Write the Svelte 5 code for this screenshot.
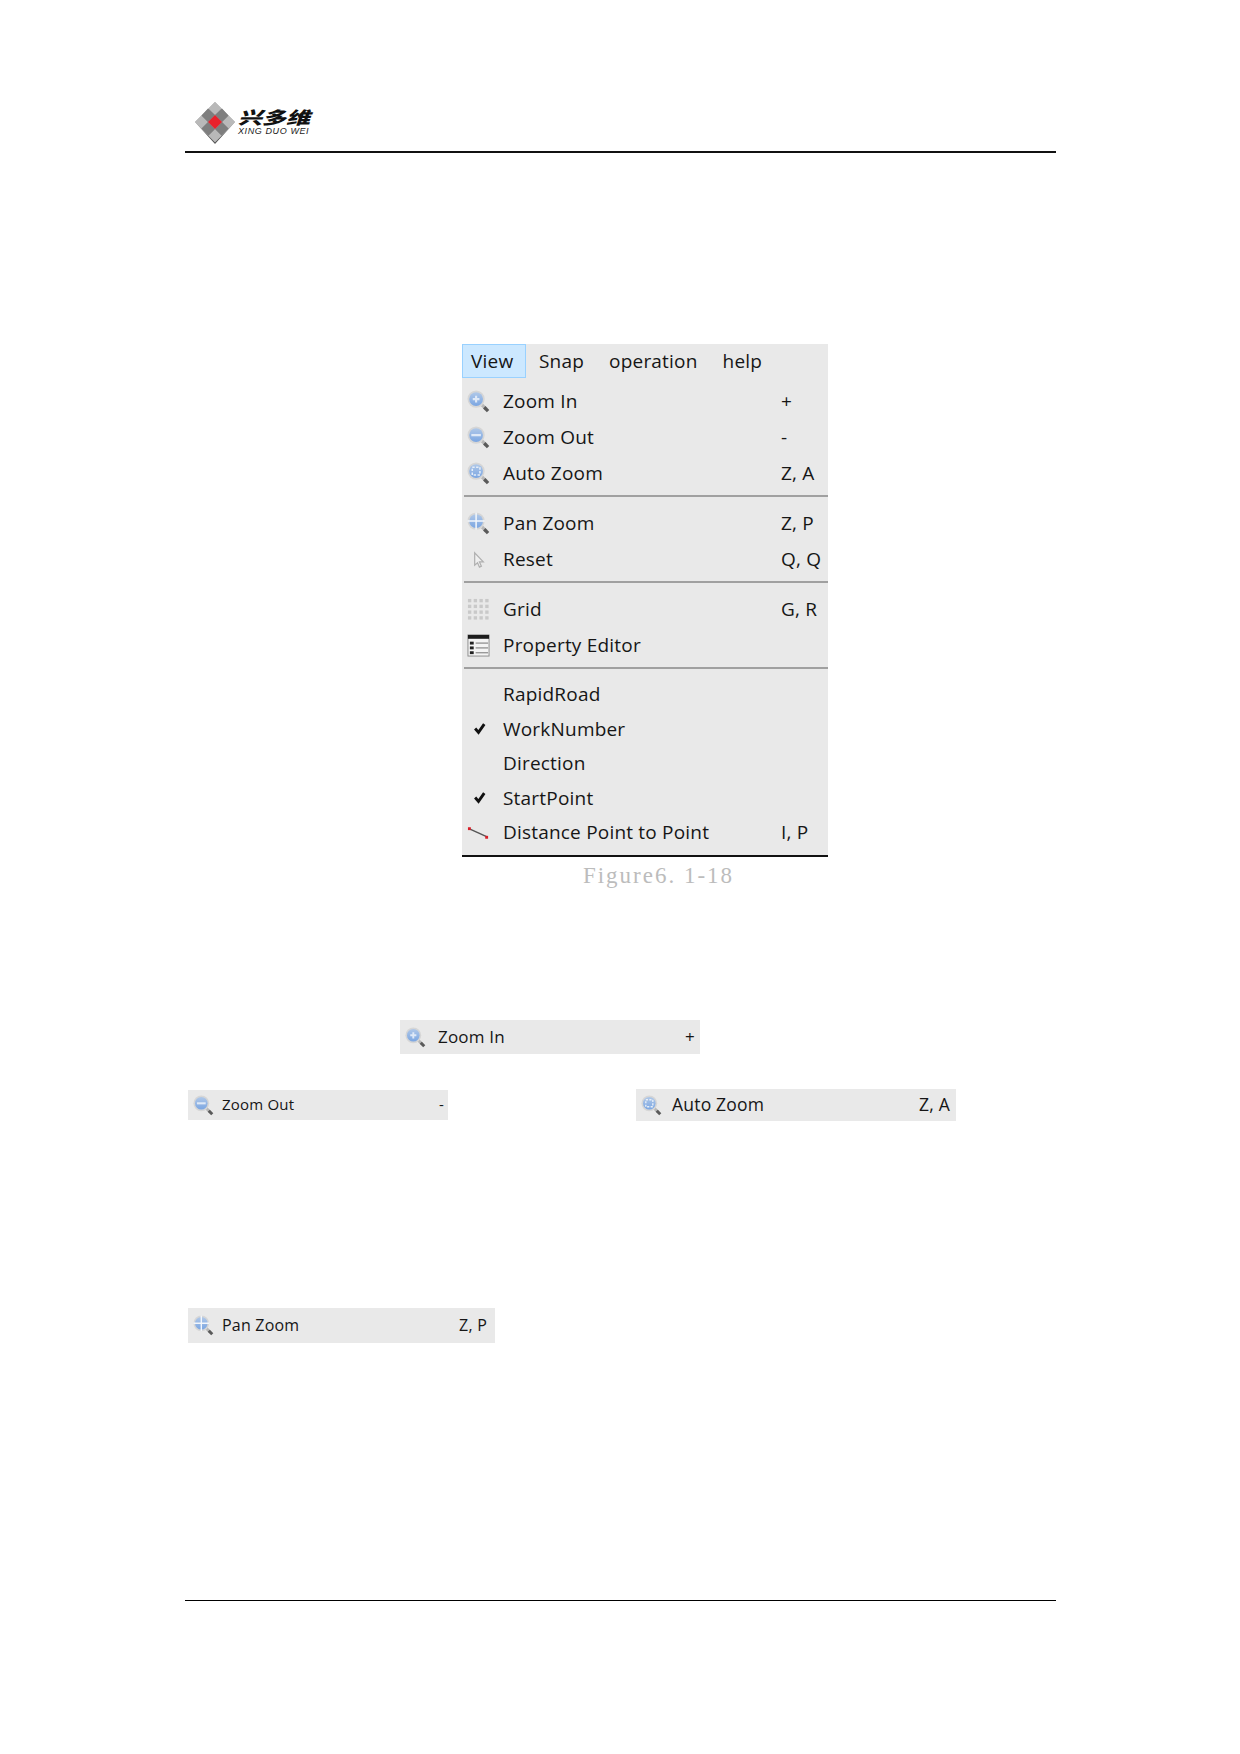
<script lang="ts">
  // Manual page: header logo, one menu screenshot, caption, cropped menu strips.
  const groups = [
    {
      rowClass: "tall",
      items: [
        { icon: "in", label: "Zoom In", key: "+" },
        { icon: "out", label: "Zoom Out", key: "-" },
        { icon: "auto", label: "Auto Zoom", key: "Z, A" },
      ],
    },
    {
      rowClass: "tall",
      items: [
        { icon: "pan", label: "Pan Zoom", key: "Z, P" },
        { icon: "reset", label: "Reset", key: "Q, Q" },
      ],
    },
    {
      rowClass: "tall",
      items: [
        { icon: "grid", label: "Grid", key: "G, R" },
        { icon: "prop", label: "Property Editor", key: "" },
      ],
    },
    {
      rowClass: "short",
      items: [
        { icon: "", label: "RapidRoad", key: "" },
        { icon: "check", label: "WorkNumber", key: "" },
        { icon: "", label: "Direction", key: "" },
        { icon: "check", label: "StartPoint", key: "" },
        { icon: "dist", label: "Distance Point to Point", key: "I, P" },
      ],
    },
  ];
</script>

{#snippet lens(kind: string)}
  <svg class="icon" viewBox="0 0 24 24" aria-hidden="true">
    <defs>
      <linearGradient id="glass-{kind}" x1="0" y1="0" x2="0" y2="1">
        <stop offset="0" stop-color="#b0c8e8" />
        <stop offset="1" stop-color="#7ba6e2" />
      </linearGradient>
    </defs>
    <path d="M14 14l6 6" stroke="#b8b8b8" stroke-width="3.500" />
    <path d="M18 18l4 4" stroke="#5a5a5a" stroke-width="3.500" />
    <circle cx="9.5" cy="9.500" r="9" fill="#d6d6d6" />
    <circle cx="9.5" cy="9.500" r="7.200" fill="url(#glass-{kind})" />
    {#if kind === "in"}
      <path d="M6 9.500h7M9.500 6v7" stroke="#dfe9f7" stroke-width="2.200" />
    {:else if kind === "out"}
      <path d="M4.500 9.500h10" stroke="#dfe9f7" stroke-width="2.400" />
    {:else if kind === "auto"}
      <rect x="5.500" y="5.500" width="8" height="8" fill="none" stroke="#e6eef8" stroke-width="1.600" stroke-dasharray="2.500 1.500" />
    {:else}
      <path d="M0.500 9.500h18M9.500 0.500v18" stroke="#f2f6fb" stroke-width="1.600" />
    {/if}
  </svg>
{/snippet}

{#snippet icon(kind: string)}
  {#if kind === "in" || kind === "out" || kind === "auto" || kind === "pan"}
    {@render lens(kind)}
  {:else if kind === "reset"}
    <svg class="icon" viewBox="0 0 24 24" aria-hidden="true">
      <path d="M8 5v13l3-2.500 2 4.500 2-1-2-4.500h4z" fill="#efefef" stroke="#b0b0b0" stroke-width="1.300" />
    </svg>
  {:else if kind === "grid"}
    <svg class="icon" viewBox="0 0 24 24" aria-hidden="true">
      {#each [1, 7, 13, 19] as y}
        {#each [1, 7, 13, 19] as x}
          <rect {x} {y} width="3.500" height="3.500" fill="#c9c9c9" />
        {/each}
      {/each}
    </svg>
  {:else if kind === "prop"}
    <svg class="icon" viewBox="0 0 24 24" aria-hidden="true">
      <rect x="1" y="1" width="22" height="22" fill="#f4f4f4" stroke="#8c8c8c" />
      <rect x="1" y="1" width="22" height="4" fill="#1c1c1c" />
      {#each [8, 13, 18] as y}
        <rect x="3" {y} width="4" height="3" fill="#222" />
        <path d="M9 {y + 1.5}h13" stroke="#9a9a9a" stroke-width="1.500" />
      {/each}
    </svg>
  {:else if kind === "check"}
    <svg class="icon" viewBox="0 0 24 24" aria-hidden="true">
      <path d="M8.500 12l3.500 4 6-8.500" fill="none" stroke="#111" stroke-width="3" />
    </svg>
  {:else if kind === "dist"}
    <svg class="icon" viewBox="0 0 24 24" aria-hidden="true">
      <path d="M2 8l19 8.500" stroke="#555" stroke-width="1.500" />
      <rect x="1" y="6.500" width="3" height="3" fill="#d8202a" />
      <rect x="19" y="15.500" width="3" height="3" fill="#d8202a" />
    </svg>
  {/if}
{/snippet}

{#snippet strip(kind: string, label: string, key: string, cls: string)}
  <div class="strip {cls}">
    {@render lens(kind)}
    <span class="strip-label">{label}</span>
    <span class="strip-key">{key}</span>
  </div>
{/snippet}

<div class="page">
  <header class="head">
    <svg class="logo-mark" viewBox="0 0 44 44" aria-hidden="true">
      <path d="M22 2l20 20-20 20L2 22z" fill="#9c9c9c" />
      <path d="M2 22l20 20 20-20-20 22z" fill="#5c5c5c" />
      <path d="M22 2l6.500 6.500-6.500 6.500-6.500-6.500zM8.500 15.500l6.500 6.500-6.500 6.500L2 22zM35.500 15.500L42 22l-6.500 6.500L29 22zM22 29l6.500 6.500L22 42l-6.500-6.500z" fill="#b9b9b9" />
      <path d="M15 8.500l7 6.500-7 7-6.500-6.500zM29 8.500l6.500 7L29 22l-7-7zM15 22l7 7-6.500 6.500L8.500 28.500zM29 22l6.500 6.500-7 7L22 29z" fill="#7e7e7e" />
      <path d="M22 15l7 7-7 7-7-7z" fill="#e8222c" />
    </svg>
    <div class="logo-text">
      <span class="logo-cn">兴多维</span>
      <span class="logo-en">XING DUO WEI</span>
    </div>
  </header>

  <section class="figure">
    <div class="menu">
      <nav class="menubar">
        <span class="top active">View</span>
        <span class="top snap">Snap</span>
        <span class="top op">operation</span>
        <span class="top">help</span>
      </nav>
      {#each groups as group, i}
        {#if i > 0}<div class="sep"></div>{/if}
        <div class="group">
          {#each group.items as item}
            <div class="row {group.rowClass}">
              <span class="slot">{#if item.icon}{@render icon(item.icon)}{/if}</span>
              <span class="label">{item.label}</span>
              <span class="key">{item.key}</span>
            </div>
          {/each}
        </div>
      {/each}
    </div>
    <p class="caption">Figure6. 1-18</p>
  </section>

  <section class="crops">
    <div class="crop-row first">
      {@render strip("in", "Zoom In", "+", "s-in")}
    </div>
    <div class="crop-row pair">
      {@render strip("out", "Zoom Out", "-", "s-out")}
      {@render strip("auto", "Auto Zoom", "Z, A", "s-auto")}
    </div>
    <div class="crop-row">
      {@render strip("pan", "Pan Zoom", "Z, P", "s-pan")}
    </div>
  </section>

  <footer class="foot"></footer>
</div>

<style>
  :global(body) {
    margin: 0;
    background: #fff;
  }
  .page {
    width: 871px;
    height: 1754px;
    margin-left: 185px;
    font-family: "Open Sans", "Noto Sans", sans-serif;
    letter-spacing: 0.2px;
    color: #161616;
    overflow: hidden;
    padding-top: 100px;
    box-sizing: border-box;
  }
  .head {
    height: 51px;
    padding-left: 8px;
    display: flex;
    align-items: flex-start;
    border-bottom: 2px solid #111;
  }
  .logo-mark {
    width: 44px;
    height: 44px;
  }
  .logo-text {
    display: flex;
    flex-direction: column;
    padding-top: 4px;
    margin-left: 1px;
  }
  .logo-cn {
    font-family: "Noto Sans CJK SC", sans-serif;
    font-weight: 900;
    font-style: italic;
    font-size: 24px;
    line-height: 36px;
    height: 36px;
    margin-bottom: -13.500px;
    letter-spacing: 0;
    color: #111;
    transform: scaleY(0.72);
    transform-origin: top left;
  }
  .logo-en {
    font-family: "Liberation Sans", sans-serif;
    font-style: italic;
    font-size: 9px;
    line-height: 9px;
    color: #222;
    letter-spacing: 0.6px;
  }
  .figure {
    margin-top: 191px;
    padding-left: 277px;
  }
  .menu {
    width: 366px;
    height: 511px;
    background: #e9e9e9;
    border-bottom: 2px solid #111;
    display: flex;
    flex-direction: column;
  }
  .menubar {
    display: flex;
    height: 34px;
    margin-bottom: 5px;
    font-size: 19px;
    align-items: center;
  }
  .top {
    padding: 0 8px;
    margin-right: 8px;
  }
  .top.active {
    align-self: stretch;
    display: flex;
    align-items: center;
    width: 46px;
    background: #cce8ff;
    border: 1px solid #99d1ff;
    margin-right: 5px;
  }
  .top.snap {
    margin-right: 9px;
  }
  .top.op {
    margin-right: 9px;
  }
  .sep {
    height: 2px;
    margin: 4px 0 8px 2px;
    background: #a0a0a0;
  }
  .row {
    display: grid;
    grid-template-columns: 41px 278px 1fr;
    align-items: center;
    font-size: 19px;
  }
  .row.tall {
    height: 36px;
  }
  .row.short {
    height: 34.5px;
  }
  .slot {
    display: flex;
    justify-content: flex-start;
    padding-left: 5px;
  }
  .icon {
    width: 23px;
    height: 23px;
    flex: none;
  }
  .caption {
    margin: 5px 0 0;
    width: 393px;
    text-align: center;
    font-family: "Liberation Serif", serif;
    font-size: 23px;
    line-height: 28px;
    color: #bcbcbc;
    letter-spacing: 2px;
  }
  .crops {
    margin-top: 130px;
  }
  .crop-row {
    display: flex;
  }
  .crop-row.first {
    padding-left: 215px;
  }
  .crop-row.pair {
    margin-top: 35px;
    height: 219px;
    padding-left: 3px;
    gap: 188px;
  }
  .crop-row:last-child {
    padding-left: 3px;
  }
  .strip {
    display: flex;
    align-items: center;
    background: #e9e9e9;
    box-sizing: border-box;
  }
  .strip .icon {
    width: 21px;
    height: 21px;
    margin-left: 5px;
  }
  .strip-label {
    flex: 1;
    padding-bottom: 2px;
  }
  .strip-key {
    padding-bottom: 2px;
  }
  .s-in {
    width: 300px;
    height: 34px;
    font-size: 17px;
  }
  .s-in .strip-label {
    margin-left: 12px;
  }
  .s-in .strip-key {
    margin-right: 5px;
  }
  .s-out {
    width: 260px;
    height: 30px;
    margin-top: 1px;
    font-size: 15px;
  }
  .s-out .strip-label {
    margin-left: 8px;
  }
  .s-out .strip-key {
    margin-right: 4px;
  }
  .s-auto {
    width: 320px;
    height: 32px;
    font-size: 17.500px;
  }
  .s-auto .strip-label {
    margin-left: 10px;
  }
  .s-auto .strip-key {
    margin-right: 6px;
  }
  .s-pan {
    width: 307px;
    height: 35px;
    font-size: 16px;
  }
  .s-pan .strip-label {
    margin-left: 8px;
  }
  .s-pan .strip-key {
    margin-right: 8px;
  }
  .foot {
    margin-top: 257px;
    border-top: 1px solid #000;
  }
</style>
